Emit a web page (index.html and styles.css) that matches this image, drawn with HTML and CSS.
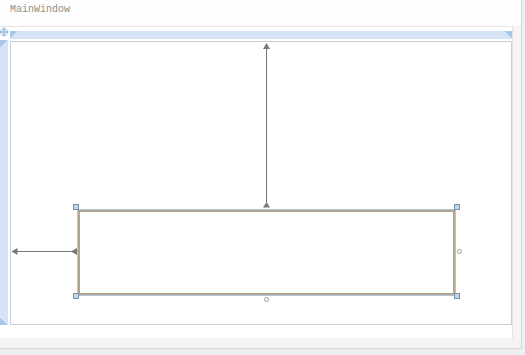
FILE: index.html
```html
<!DOCTYPE html>
<html>
<head>
    <title>MainWindow</title>
    <link rel="stylesheet" href="styles.css">
</head>
<body>
    <div class="window">
        <div class="titlebar">MainWindow</div>
        <div class="client">
            <div class="designer">
                <div class="corner">
                    <svg class="move-icon" width="10" height="10" viewBox="0 0 10 10">
                        <circle cx="5" cy="5" r="4.5" fill="#dbe7f6"/>
                        <path d="M5 1 L5 9 M1 5 L9 5" stroke="#8fb1dc" stroke-width="1"/>
                        <path d="M5 0.5 L3.5 2.5 L6.5 2.5 Z M5 9.5 L3.5 7.5 L6.5 7.5 Z M0.5 5 L2.5 3.5 L2.5 6.5 Z M9.5 5 L7.5 3.5 L7.5 6.5 Z" fill="#8fb1dc"/>
                    </svg>
                </div>
                <div class="ruler-top"></div>
                <div class="ruler-left"></div>
                <div class="form">
                    <svg class="guides" width="500" height="282">
                        <g transform="translate(-11,-42)" fill="#777" stroke="none">
                            <line x1="266.5" y1="47" x2="266.5" y2="203" stroke="#777" stroke-width="1"/>
                            <polygon points="266.5,43 263,49 270,49"/>
                            <polygon points="266.5,202 263,207.5 270,207.5"/>
                            <line x1="15" y1="251.5" x2="73" y2="251.5" stroke="#777" stroke-width="1"/>
                            <polygon points="11.5,251.5 17.5,248 17.5,255"/>
                            <polygon points="71,251.5 77,248 77,255"/>
                        </g>
                    </svg>
                    <div class="widget"></div>
                    <div class="handle h-tl"></div>
                    <div class="handle h-tr"></div>
                    <div class="handle h-bl"></div>
                    <div class="handle h-br"></div>
                    <div class="grip g-right"></div>
                    <div class="grip g-bottom"></div>
                </div>
            </div>
        </div>
    </div>
</body>
</html>
```

FILE: styles.css
```css
body {
    margin: 0;
    background-color: #efefef;
    font-family: 'Liberation Mono', monospace;
}
.window {
    width: 521px;
    height: 348px;
    background-color: #f4f4f4;
    border-right: 1px solid #d6d6d6;
    border-bottom: 1px solid #d6d6d6;
}
.titlebar {
    height: 26px;
    padding-left: 10px;
    box-sizing: border-box;
    background-color: #fdfdfd;
    color: #8e8e8e;
    font-size: 10px;
    line-height: 20px;
}
.client {
    width: 513px;
    height: 312px;
    box-sizing: border-box;
    background-color: #fff;
    border-top: 1px solid #e6e6e6;
    border-right: 1px solid #e2e2e2;
}
.designer {
    display: grid;
    grid-template-columns: 10px 502px;
    grid-template-rows: 10px 284px;
    padding-top: 4px;
}
.corner {
    position: relative;
}
.move-icon {
    position: absolute;
    left: -1px;
    top: -4px;
}
.ruler-top {
    height: 8px;
    background:
        linear-gradient(135deg, #a8c5ea 5px, transparent 5px),
        linear-gradient(225deg, #a8c5ea 5px, transparent 5px),
        #d5e3f5;
}
.ruler-left {
    width: 8px;
    margin-top: -1px;
    background:
        linear-gradient(135deg, #a8c5ea 5px, transparent 5px),
        linear-gradient(45deg, #a8c5ea 5px, transparent 5px),
        #d5e3f5;
}
.form {
    position: relative;
    border: 1px solid #c5cfdc;
    box-sizing: border-box;
    height: 284px;
    background-color: #fff;
}
.guides {
    position: absolute;
    left: 0;
    top: 0;
}
.widget {
    position: absolute;
    left: 66px;
    top: 167px;
    width: 379px;
    height: 87px;
    box-sizing: border-box;
    border: 1px solid #b6c7dc;
    box-shadow: inset 0 0 0 2px #b3a590;
}
.handle {
    position: absolute;
    width: 6px;
    height: 6px;
    box-sizing: border-box;
    background-color: #c6d6e7;
    border: 1px solid #7890aa;
}
.h-tl { left: 62px; top: 162px; }
.h-tr { left: 443px; top: 162px; }
.h-bl { left: 62px; top: 251px; }
.h-br { left: 443px; top: 251px; }
.grip {
    position: absolute;
    width: 5px;
    height: 5px;
    box-sizing: border-box;
    border: 1px solid #9c9c9c;
    border-radius: 50%;
    background-color: #fff;
}
.g-right { left: 446px; top: 207px; }
.g-bottom { left: 253px; top: 255px; }
```
